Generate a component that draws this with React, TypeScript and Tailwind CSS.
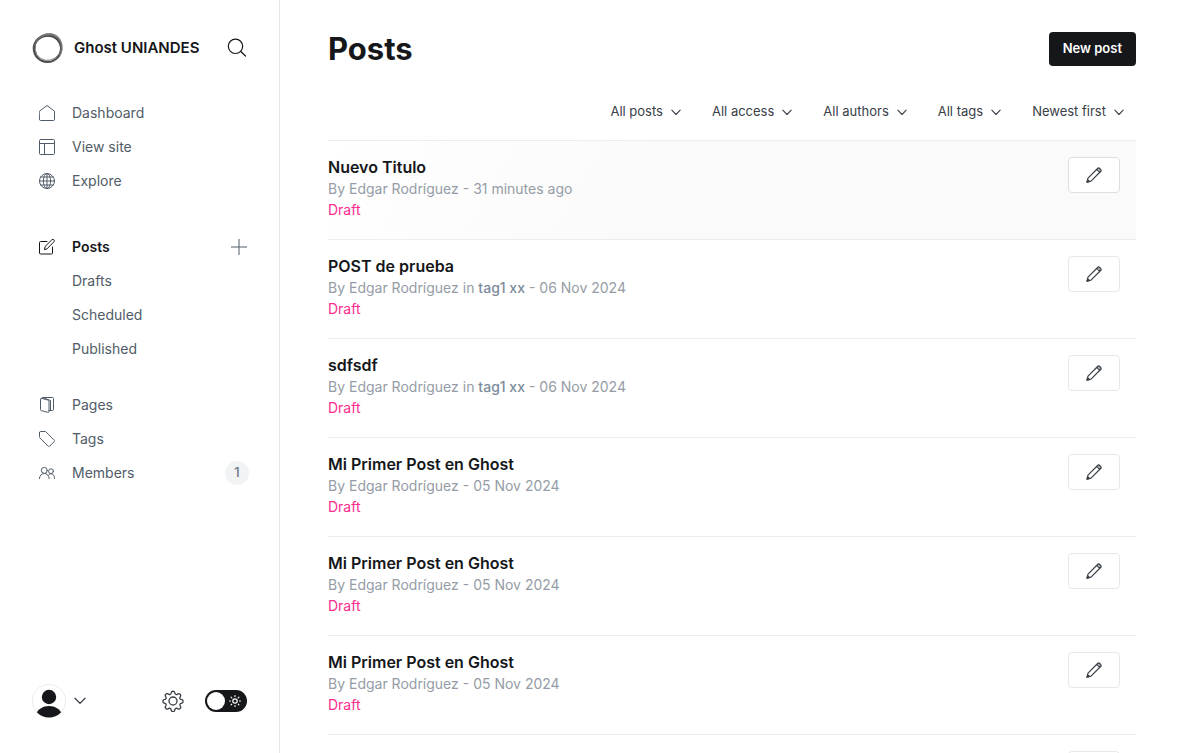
import type { ReactNode } from "react";

type Post = { title: string; tag?: string; date: string };

const posts: Post[] = [
  { title: "Nuevo Titulo", date: "31 minutes ago" },
  { title: "POST de prueba", tag: "tag1 xx", date: "06 Nov 2024" },
  { title: "sdfsdf", tag: "tag1 xx", date: "06 Nov 2024" },
  { title: "Mi Primer Post en Ghost", date: "05 Nov 2024" },
  { title: "Mi Primer Post en Ghost", date: "05 Nov 2024" },
  { title: "Mi Primer Post en Ghost", date: "05 Nov 2024" },
  { title: "Mi Primer Post en Ghost", date: "05 Nov 2024" },
];

const filters = [
  { label: "Post type", value: "All posts" },
  { label: "Access", value: "All access" },
  { label: "Author", value: "All authors" },
  { label: "Tag", value: "All tags" },
  { label: "Sort order", value: "Newest first" },
];

function Icon({ children, className = "size-4" }: { children: ReactNode; className?: string }) {
  return (
    <svg
      viewBox="0 0 16 16"
      className={className}
      fill="none"
      stroke="currentColor"
      strokeWidth="1"
      strokeLinecap="round"
      strokeLinejoin="round"
      aria-hidden="true"
    >
      {children}
    </svg>
  );
}

function Chevron({ className }: { className: string }) {
  return (
    <svg viewBox="0 0 12 8" className={className} fill="none" stroke="currentColor" strokeWidth="1.3" strokeLinecap="round" strokeLinejoin="round" aria-hidden="true">
      <path d="M1 1.2 6 6.4l5-5.2" />
    </svg>
  );
}

function PencilIcon() {
  return (
    <Icon>
      <g strokeWidth="1.2">
        <path d="M1 15.200 2 11.200 11.600 1.500a1.500 1.500 0 0 1 2.100 0l.9.9a1.500 1.500 0 0 1 0 2.100L5 14.100zM10.700 2.400l3 3" />
        <path d="M12 1.500l2.500 2.500" strokeWidth="0.8" />
        <path d="M1 15.200l.7-2.400 1.700 1.700z" fill="currentColor" />
      </g>
    </Icon>
  );
}

function Logo() {
  return (
    <svg viewBox="0 0 32 32" className="size-8" fill="none" aria-hidden="true">
      <path
        d="M15 2.200C21 0 27.500 3 29.500 9.500c1.800 6 0 12.500-5 16.500 3.200-4.500 4.300-9.500 2.600-14C25.200 6.500 20.500 4.200 13 4.600z"
        fill="#999"
        opacity="0.75"
      />
      <ellipse cx="15.500" cy="16.500" rx="14" ry="13.800" stroke="#555" strokeWidth="1.600" />
      <ellipse cx="16.300" cy="15.700" rx="13.700" ry="14.200" stroke="#888" strokeWidth="0.900" transform="rotate(35 16 16)" />
      <ellipse cx="15.200" cy="16.700" rx="13.200" ry="12.800" stroke="#444" strokeWidth="1.200" transform="rotate(-20 16 16)" />
      <ellipse cx="17" cy="15.600" rx="13.800" ry="12.900" stroke="#777" strokeWidth="0.900" transform="rotate(-55 16 16)" />
    </svg>
  );
}

function NavItem({ icon, label, active }: { icon?: ReactNode; label: string; active?: boolean }) {
  return (
    <a
      href="#"
      className={`flex h-[34px] grow items-center gap-2.5 text-sm ${active ? "font-semibold text-[#15171a]" : "text-[#515c68]"}`}
    >
      <span className="flex w-[30px] justify-center">{icon}</span>
      {label}
    </a>
  );
}

function Sidebar() {
  return (
    <aside className="flex w-[280px] shrink-0 flex-col border-r border-[#e6e9eb] px-8 pt-8">
      <div className="flex h-8 items-center gap-2.5 text-[#15171a]">
        <Logo />
        <span className="grow text-[15px] font-semibold">Ghost UNIANDES</span>
        <button type="button" aria-label="Search" className="flex text-[#15171a]">
          <svg viewBox="0 0 20 20" className="size-5" fill="none" stroke="currentColor" strokeWidth="1.200" strokeLinecap="round" aria-hidden="true">
            <circle cx="8.500" cy="8.300" r="7.200" />
            <path d="m13.800 13.500 4.700 4.500" />
          </svg>
        </button>
      </div>

      <nav className="mt-8 flex flex-col">
        <NavItem
          label="Dashboard"
          icon={<Icon><path d="M.5 6.200 8 .5l7.500 5.700v8.300a1 1 0 0 1-1 1h-13a1 1 0 0 1-1-1z" /></Icon>}
        />
        <NavItem
          label="View site"
          icon={<Icon><rect x=".5" y=".5" width="15" height="15" rx="1" /><path d="M.5 4.500h15M5.500 4.500v11" /></Icon>}
        />
        <NavItem
          label="Explore"
          icon={<Icon><circle cx="8" cy="8" r="7.500" /><ellipse cx="8" cy="8" rx="3.600" ry="7.500" /><path d="M.5 8h15M1.700 4h12.600M1.700 12h12.600M8 .5v15" /></Icon>}
        />

        <div className="mt-8 flex items-center">
          <NavItem
            active
            label="Posts"
            icon={<Icon><path d="M8 2.500H1.500a1 1 0 0 0-1 1v10.500a1 1 0 0 0 1 1h11a1 1 0 0 0 1-1V8M5.500 10.300l.7-2.900 6.700-6.600a1.400 1.400 0 0 1 2 2L8.300 9.600z" /></Icon>}
          />
          <button type="button" aria-label="New post" className="text-[#515c68]">
            <Icon className="size-4"><path d="M8 0v16M0 8h16" /></Icon>
          </button>
        </div>
        <NavItem label="Drafts" />
        <NavItem label="Scheduled" />
        <NavItem label="Published" />

        <div className="mt-[22px] flex flex-col">
          <NavItem
            label="Pages"
            icon={<Icon><path d="M1.500 2.300v10.400c0 .5.300.8.700.9l7 1.800c.5.100.8-.2.800-.6V4c0-.5-.3-.8-.7-.9L2.800 1.400c-.7-.2-1.300.2-1.300.9z" /><path d="M2.500 1.400 4 .5h9.500a1 1 0 0 1 1 1v11a1 1 0 0 1-1 1H10M11.500 13.500V3.500L4 .7" /></Icon>}
          />
          <NavItem
            label="Tags"
            icon={<Icon><path d="M.5 1.500v4.300c0 .4.100.7.400 1l8 8.200c.5.600 1.300.6 1.900 0l4.200-4.200c.6-.6.600-1.400 0-1.900L7 .9C6.700.6 6.400.5 6 .5H1.500a1 1 0 0 0-1 1z" /></Icon>}
          />
          <div className="-mr-0.5 flex items-center">
            <NavItem
              label="Members"
              icon={<Icon><circle cx="5.300" cy="5.400" r="3" /><path d="M.4 13.600c.2-3 2.100-5.100 4.900-5.100s4.700 2.100 4.900 5.100" /><circle cx="12" cy="6.200" r="2.400" /><path d="M9.700 9.700c3.200-2.400 5.700-.2 6 3.900" /></Icon>}
            />
            <span className="flex size-6 items-center justify-center rounded-full bg-[#f1f3f4] text-[13px] font-medium text-[#6b7885]">1</span>
          </div>
        </div>
      </nav>

      <div className="mt-auto mb-[35px] flex items-center">
        <button type="button" aria-label="Account" className="flex items-center gap-2 text-[#394047]">
          <svg viewBox="0 0 34 34" className="size-[34px]" aria-hidden="true">
            <defs>
              <clipPath id="avatar-clip"><circle cx="17" cy="17" r="16.500" /></clipPath>
            </defs>
            <circle cx="17" cy="17" r="16.500" fill="#fff" stroke="#e9ebed" />
            <g fill="#15171a" clipPath="url(#avatar-clip)">
              <circle cx="17" cy="13" r="7.200" />
              <path d="M4 30c2-5 7-8 13-8s11 3 13 8v4H4z" />
            </g>
          </svg>
          <Chevron className="h-2 w-3" />
        </button>
        <a href="#" aria-label="Settings" className="mr-[21px] ml-auto text-[#394047]">
          <svg viewBox="0 0 22 22" className="size-[22px]" fill="none" stroke="currentColor" strokeWidth="1.300" strokeLinejoin="round" aria-hidden="true">
            <circle cx="11" cy="11" r="4" />
            <path d="M9.300 2.500c.4-1.700 3-1.700 3.400 0l.3 1c.3.900 1.300 1.300 2.100.9l.9-.5c1.600-.8 3.300.9 2.500 2.500l-.5.900c-.4.800 0 1.800.9 2.100l1 .3c1.600.5 1.600 2.900 0 3.400l-1 .3c-.9.300-1.300 1.300-.9 2.100l.5.9c.8 1.600-.9 3.300-2.500 2.500l-.9-.5c-.8-.4-1.800 0-2.100.9l-.3 1c-.4 1.700-3 1.700-3.400 0l-.3-1c-.3-.9-1.300-1.300-2.100-.9l-.9.5c-1.600.8-3.300-.9-2.500-2.500l.5-.9c.4-.8 0-1.800-.9-2.100l-1-.3c-1.600-.5-1.600-2.900 0-3.400l1-.3c.9-.3 1.300-1.300.9-2.100l-.5-.9c-.8-1.600.9-3.300 2.500-2.500l.9.500c.8.4 1.800 0 2.100-.9z" />
          </svg>
        </a>
        <label className="flex h-[22px] w-[42px] cursor-pointer items-center justify-between rounded-full bg-[#15171a] pr-1.5 pl-0.5">
          <input type="checkbox" aria-label="Night shift" className="sr-only" />
          <span className="size-[18px] rounded-full bg-white" />
          <svg viewBox="0 0 12 12" className="size-3" fill="none" stroke="#fff" strokeWidth="1.200" strokeLinecap="round" aria-hidden="true">
            <circle cx="6" cy="6" r="2.200" />
            <path d="M6 .6v.9M6 10.500v.9M.6 6h.9M10.500 6h.9M2.100 2.100l.7.700M9.200 9.200l.7.700M2.100 9.900l.7-.7M9.200 2.800l.7-.7" />
          </svg>
        </label>
      </div>
    </aside>
  );
}

function PostRow({ post, highlighted }: { post: Post; highlighted: boolean }) {
  return (
    <li
      className={`flex h-[99px] items-start justify-between border-t border-[#ebeef0] pt-4 pr-4 ${
        highlighted ? "bg-linear-120 from-white from-0% to-[#fafafa] to-40%" : ""
      }`}
    >
      <a href="#" className="flex flex-col text-sm leading-[21px]">
        <h3 className="text-base leading-[21px] font-semibold text-[#15171a]">{post.title}</h3>
        <p className="text-[#959ca6]">
          By Edgar Rodríguez{" "}
          {post.tag && (
            <>
              in <span className="font-medium text-[#7c8b9a]">{post.tag}</span>{" "}
            </>
          )}
          - {post.date}
        </p>
        <p className="text-[#fb2d8d]">Draft</p>
      </a>
      <a
        href="#"
        aria-label={`Edit ${post.title}`}
        className={`flex h-9 w-[52px] items-center justify-center rounded border bg-white text-[#394047] ${
          highlighted ? "border-[#dddfe1]" : "border-[#e6e9eb]"
        }`}
      >
        <PencilIcon />
      </a>
    </li>
  );
}

export default function App() {
  return (
    <div className="flex h-screen overflow-hidden bg-white font-['Inter',sans-serif]">
      <Sidebar />
      <main className="min-w-0 grow overflow-y-auto px-12 pt-8 [scrollbar-width:none]">
        <header className="flex h-[34px] items-center justify-between">
          <h1 className="text-[31px] leading-8 font-bold text-[#15171a]">Posts</h1>
          <a href="#" className="flex h-[34px] items-center rounded bg-[#15171a] px-3.5 text-[13px] font-semibold text-white">
            New post
          </a>
        </header>
        <div className="mt-[29px] flex h-[34px] items-center justify-end gap-[31px] pr-3">
          {filters.map((filter) => (
            <div key={filter.label} className="grid items-center text-[13px] text-[#394047]">
              <select
                aria-label={filter.label}
                className="col-start-1 row-start-1 field-sizing-content h-[34px] appearance-none bg-transparent pr-[18px] outline-none"
              >
                <option>{filter.value}</option>
              </select>
              <Chevron className="pointer-events-none col-start-1 row-start-1 h-[7px] w-2.5 justify-self-end" />
            </div>
          ))}
        </div>
        <ol className="mt-[11px]">
          {posts.map((post, index) => (
            <PostRow key={index} post={post} highlighted={index === 0} />
          ))}
        </ol>
      </main>
    </div>
  );
}
